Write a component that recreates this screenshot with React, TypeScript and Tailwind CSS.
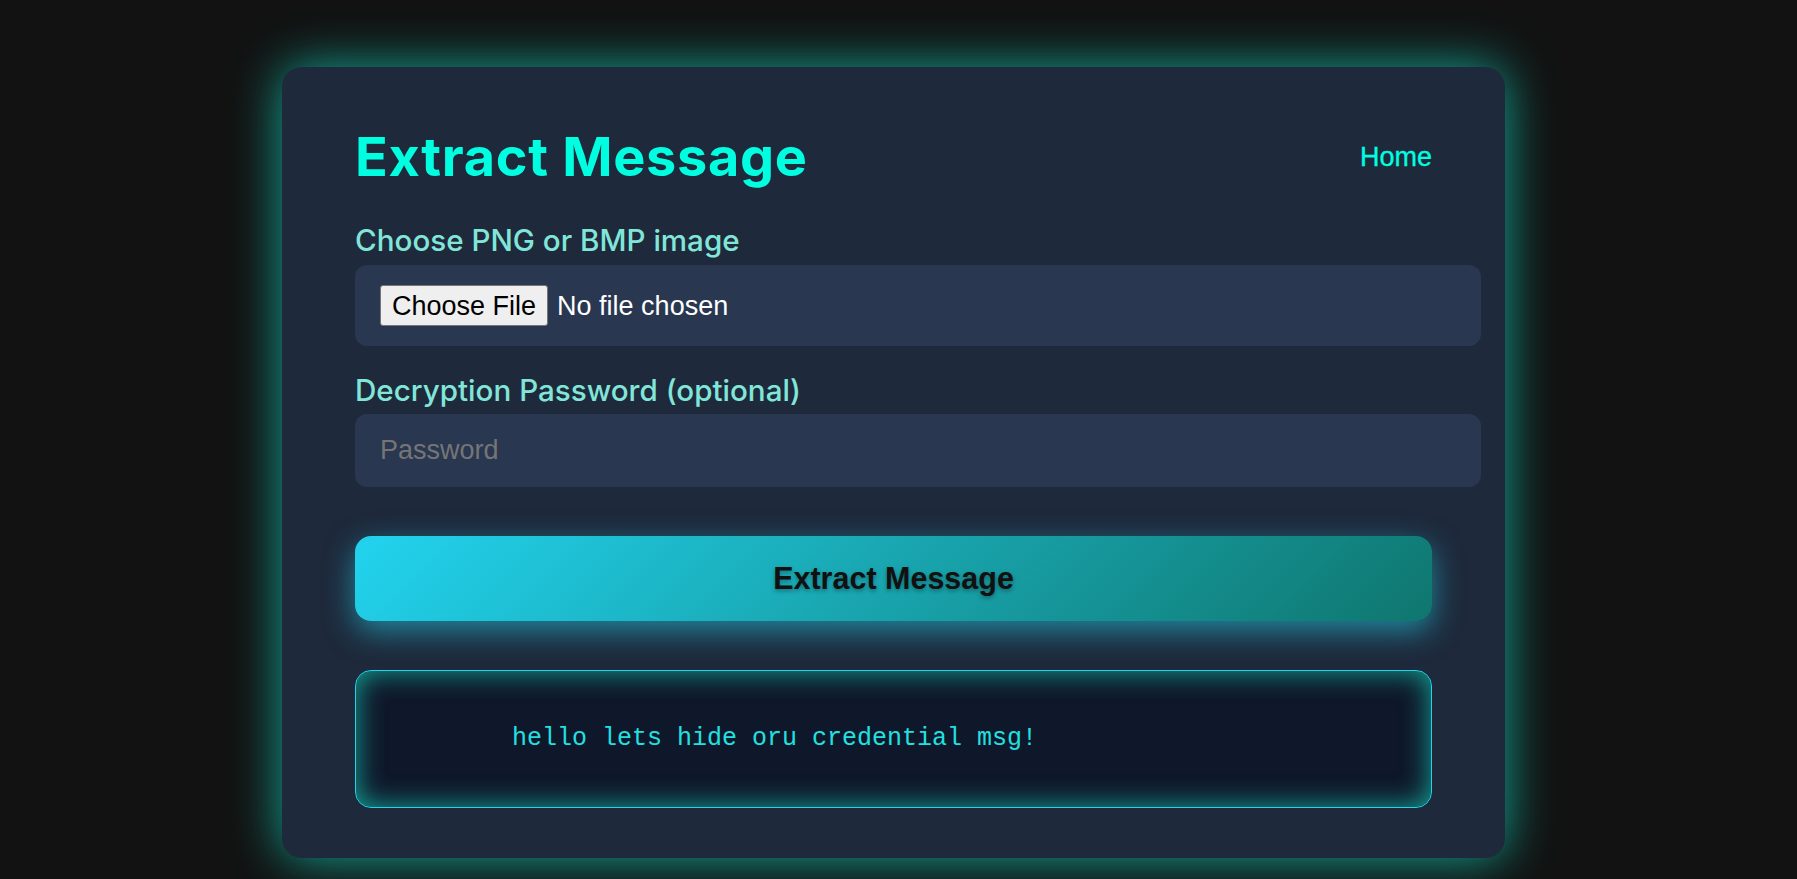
import { useState } from 'react';

const App = () => {
  const [password, setPassword] = useState('');

  return (
    <div className="min-h-screen bg-[#121212] pl-[282px] pt-[67px] pb-[21px]">
      <div className="w-[1223px] rounded-[20px] bg-[#1e293b] px-[73px] pt-[58px] pb-[50px] shadow-[0_0_50px_rgba(20,184,166,0.9)]">
        {/* Header */}
        <div className="flex items-center justify-between">
          <h1 className="font-['Inter',sans-serif] text-[54px] font-bold leading-[64px] tracking-[0.7px] text-[#00ffe1]">
            Extract Message
          </h1>
          <a href="#" className="font-['Liberation_Sans',Arial,sans-serif] text-[27px] font-medium text-[#00ffe1] [-webkit-text-stroke:0.3px_#00ffe1]">
            Home
          </a>
        </div>

        {/* Image picker */}
        <label className="mt-[33px] block font-['Inter',sans-serif] text-[29.6px] font-medium leading-[36px] text-[#81e6d9]">
          Choose PNG or BMP image
        </label>
        <div className="mt-[7px] flex h-[81px] w-[1126px] items-center gap-[9px] rounded-[12px] bg-[#293751] px-[25px] font-['Liberation_Sans',Arial,sans-serif] text-[27px]">
          <span className="flex h-[41px] items-center rounded-[3px] border border-[#767676] bg-[#efefef] px-[11px] pt-[1px] text-black">
            Choose File
          </span>
          <span className="pt-[1px] text-white">No file chosen</span>
        </div>

        {/* Password */}
        <label className="mt-[26px] block font-['Inter',sans-serif] text-[29.6px] font-medium leading-[36px] text-[#81e6d9]">
          Decryption Password (optional)
        </label>
        <input
          type="password"
          value={password}
          onChange={(e) => setPassword(e.target.value)}
          placeholder="Password"
          className="mt-[6px] block h-[73px] w-[1126px] rounded-[12px] bg-[#293751] px-[25px] font-['Liberation_Sans',Arial,sans-serif] text-[27px] text-white outline-none placeholder:text-[#757575]"
        />

        {/* Action */}
        <button className="mt-[49px] flex h-[85px] w-full items-center justify-center rounded-[16px] bg-[linear-gradient(135deg,#22d3ee,#0f766e)] font-['Liberation_Sans',Arial,sans-serif] text-[30.5px] font-bold text-[#111111] shadow-[0_10px_30px_rgba(34,211,238,0.55)] [text-shadow:0_2px_4px_rgba(0,0,0,0.35)]">
          Extract Message
        </button>

        {/* Result */}
        <div className="mt-[49px] flex h-[138px] items-center rounded-[16px] border border-[#22d3ee] bg-[#0f172a] pl-[156px] shadow-[inset_0_0_28px_rgba(20,184,166,0.9)]">
          <pre className="font-['Liberation_Mono','Courier_New',monospace] text-[25px] text-[#22e0e0]">
            hello lets hide oru credential msg!
          </pre>
        </div>
      </div>
    </div>
  );
};

export default App;
